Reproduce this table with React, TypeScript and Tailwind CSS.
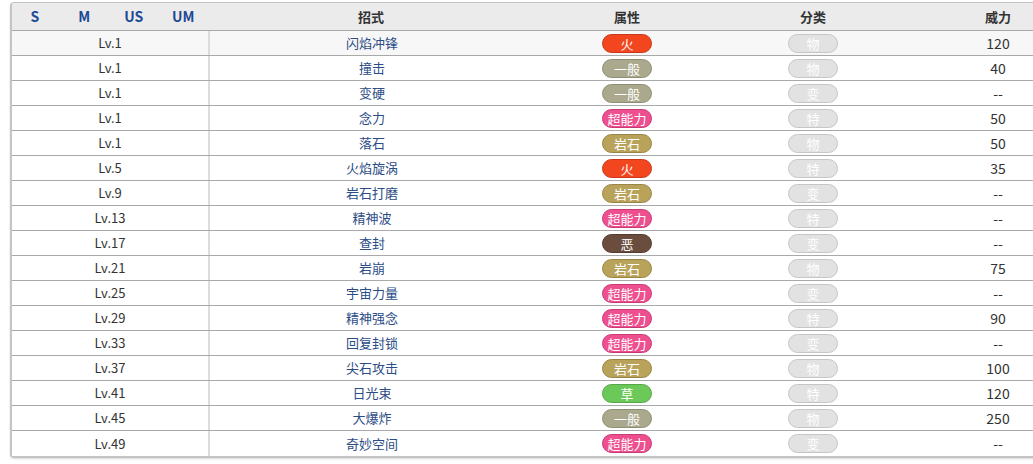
import React from "react";

type Row = { lv: string; name: string; type: string; cat: string; power: string };

const rows: Row[] = [
  { lv: "Lv.1", name: "闪焰冲锋", type: "火", cat: "物", power: "120" },
  { lv: "Lv.1", name: "撞击", type: "一般", cat: "物", power: "40" },
  { lv: "Lv.1", name: "变硬", type: "一般", cat: "变", power: "--" },
  { lv: "Lv.1", name: "念力", type: "超能力", cat: "特", power: "50" },
  { lv: "Lv.1", name: "落石", type: "岩石", cat: "物", power: "50" },
  { lv: "Lv.5", name: "火焰旋涡", type: "火", cat: "特", power: "35" },
  { lv: "Lv.9", name: "岩石打磨", type: "岩石", cat: "变", power: "--" },
  { lv: "Lv.13", name: "精神波", type: "超能力", cat: "特", power: "--" },
  { lv: "Lv.17", name: "查封", type: "恶", cat: "变", power: "--" },
  { lv: "Lv.21", name: "岩崩", type: "岩石", cat: "物", power: "75" },
  { lv: "Lv.25", name: "宇宙力量", type: "超能力", cat: "变", power: "--" },
  { lv: "Lv.29", name: "精神强念", type: "超能力", cat: "特", power: "90" },
  { lv: "Lv.33", name: "回复封锁", type: "超能力", cat: "变", power: "--" },
  { lv: "Lv.37", name: "尖石攻击", type: "岩石", cat: "物", power: "100" },
  { lv: "Lv.41", name: "日光束", type: "草", cat: "特", power: "120" },
  { lv: "Lv.45", name: "大爆炸", type: "一般", cat: "物", power: "250" },
  { lv: "Lv.49", name: "奇妙空间", type: "超能力", cat: "变", power: "--" },
];

const typeClass: Record<string, string> = {
  火: "bg-[#f2461f] border-[#c9381a]",
  一般: "bg-[#aba98d] border-[#8f8d74]",
  超能力: "bg-[#ee4f8f] border-[#c93a74]",
  岩石: "bg-[#b9a35a] border-[#998646]",
  恶: "bg-[#6b4d3d] border-[#553b2e]",
  草: "bg-[#6cc858] border-[#56a845]",
};

export default function App() {
  return (
    <div
      className="w-[1033px] h-[464px] overflow-hidden bg-white pl-[10px] pt-[2px]"
      style={{ fontFamily: '"Noto Sans CJK SC", "Noto Sans", sans-serif' }}
    >
      <div className="w-[1100px] border-l-2 border-t border-b-2 border-[#c4c4c4] rounded-tl-[4px] rounded-bl-[4px] shadow-[0_1px_2px_rgba(0,0,0,0.15)]">
        <div className="flex h-[28px] items-center bg-[#ebebeb] border-b border-[#a9a9a9] text-[13px] font-bold text-[#333]">
          <div className="w-[198px] flex text-[14px] text-[#1d4a94] -ml-[2px]">
            <div className="w-[50px] text-center">S</div>
            <div className="w-[50px] text-center">M</div>
            <div className="w-[50px] text-center">US</div>
            <div className="w-[50px] text-center">UM</div>
          </div>
          <div className="w-[326px] text-center">招式</div>
          <div className="w-[186px] text-center">属性</div>
          <div className="w-[186px] text-center">分类</div>
          <div className="w-[184px] text-center">威力</div>
        </div>
        {rows.map((r, i) => (
          <div
            key={i}
            className={`flex h-[25px] items-center text-[13px] ${i < rows.length - 1 ? "border-b border-[#a9a9a9]" : ""} ${i === 0 ? "bg-[#f7f7f7]" : "bg-white"}`}
          >
            <div className="w-[198px] h-full flex items-center justify-center text-[#333] border-r-2 border-[#dcdcdc]">
              {r.lv}
            </div>
            <div className="w-[324px] text-center text-[#2b4c86]">{r.name}</div>
            <div className="w-[186px] flex justify-center">
              <span
                className={`w-[50px] h-[19px] rounded-full border flex items-center justify-center text-white text-[13px] leading-none ${typeClass[r.type]}`}
              >
                {r.type}
              </span>
            </div>
            <div className="w-[186px] flex justify-center">
              <span className="w-[50px] h-[19px] rounded-full border border-[#c6c6c6] bg-[#e2e2e2] flex items-center justify-center text-white text-[13px] leading-none">
                {r.cat}
              </span>
            </div>
            <div className="w-[184px] text-center text-[#333] text-[14px]">{r.power}</div>
          </div>
        ))}
      </div>
    </div>
  );
}
